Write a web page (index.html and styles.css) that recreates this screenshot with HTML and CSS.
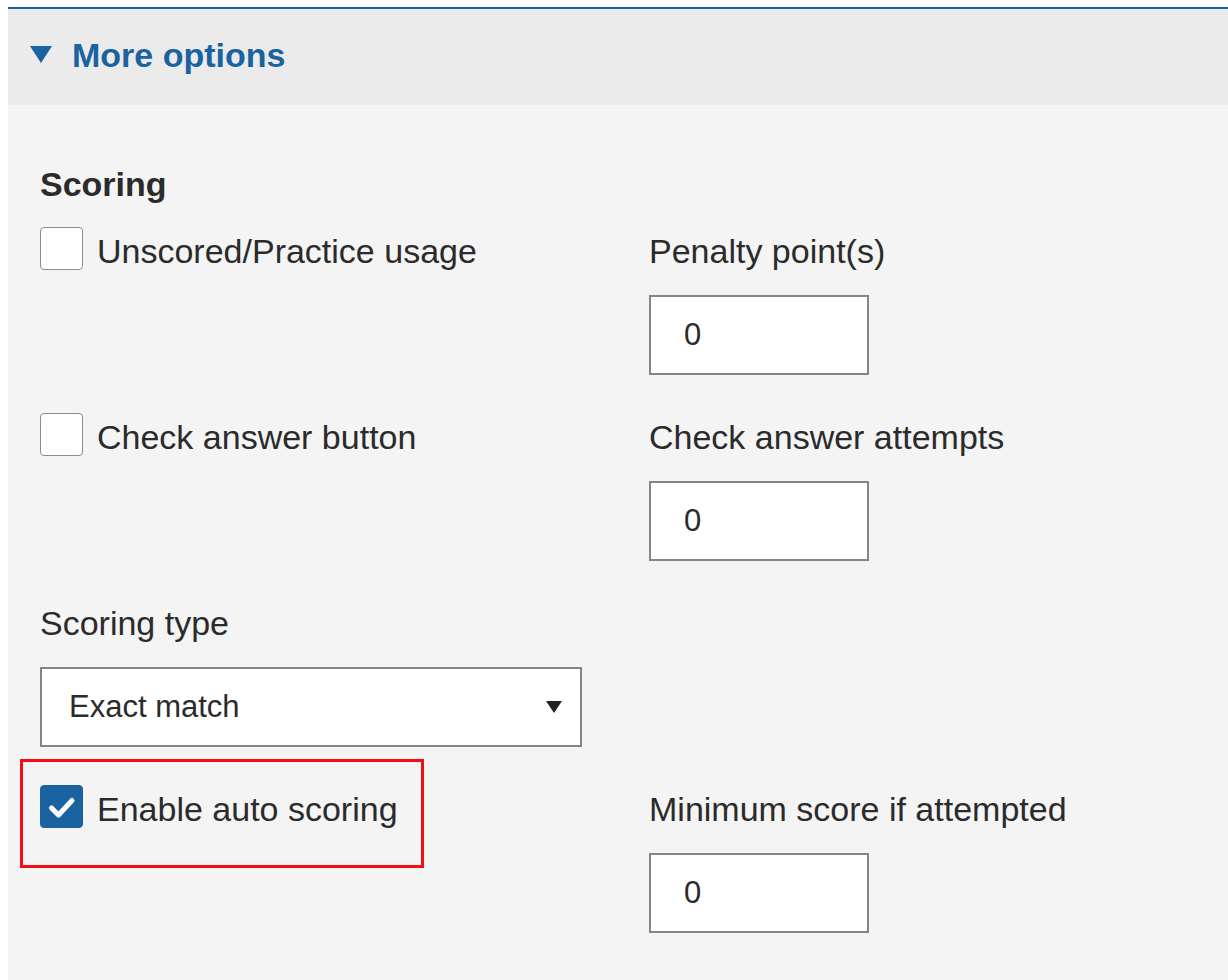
FILE: index.html
```html
<!DOCTYPE html>
<html lang="en">
<head>
<meta charset="utf-8">
<title>More options</title>
<link rel="stylesheet" href="styles.css">
</head>
<body>
<section class="panel">
  <div class="panel-header">
    <span class="caret"></span>
    <span class="panel-title">More options</span>
  </div>
  <div class="panel-body">
    <h2 class="section-title">Scoring</h2>

    <div class="form-grid">
      <div class="cell">
        <label class="check"><span class="box"></span><span class="check-text">Unscored/Practice usage</span></label>
      </div>
      <div class="cell">
        <div class="field-label">Penalty point(s)</div>
        <div class="input">0</div>
      </div>

      <div class="cell">
        <label class="check"><span class="box"></span><span class="check-text">Check answer button</span></label>
      </div>
      <div class="cell">
        <div class="field-label">Check answer attempts</div>
        <div class="input">0</div>
      </div>

      <div class="cell">
        <div class="field-label">Scoring type</div>
        <div class="select"><span>Exact match</span><span class="select-arrow"></span></div>
      </div>
      <div class="cell"></div>

      <div class="cell">
        <div class="highlight">
          <label class="check"><span class="box checked"><svg viewBox="0 0 43 43" width="43" height="43"><polyline points="11.5,23 18.5,30 32,15.5" fill="none" stroke="#ffffff" stroke-width="5" stroke-linecap="round" stroke-linejoin="round"/></svg></span><span class="check-text">Enable auto scoring</span></label>
        </div>
      </div>
      <div class="cell">
        <div class="field-label">Minimum score if attempted</div>
        <div class="input">0</div>
      </div>
    </div>
  </div>
</section>
</body>
</html>
```

FILE: styles.css
```css
html, body {
  margin: 0;
  padding: 0;
  background: #ffffff;
}

body {
  font-family: "Liberation Sans", Arial, Helvetica, sans-serif;
  color: #2b2b2b;
  height: 980px;
  overflow: hidden;
}

.panel {
  margin: 7px 0 0 8px;
  border-top: 2px solid #1a62a0;
}

.panel-header {
  height: 96px;
  background: #ebebeb;
  display: flex;
  align-items: center;
  padding-left: 22px;
  gap: 20px;
}

.caret {
  width: 0;
  height: 0;
  border-left: 11px solid transparent;
  border-right: 11px solid transparent;
  border-top: 17px solid #1a62a0;
  margin-top: -6px;
}

.panel-title {
  font-size: 34px;
  font-weight: bold;
  color: #1a62a0;
  margin-top: -4px;
}

.panel-body {
  background: #f4f4f4;
  padding: 58px 32px 0;
  height: 875px;
  box-sizing: border-box;
}

.section-title {
  margin: 0;
  font-size: 34px;
  line-height: 43px;
  font-weight: bold;
  color: #2b2b2b;
}

.form-grid {
  display: grid;
  grid-template-columns: 609px 1fr;
  row-gap: 38px;
  margin-top: 21px;
}

.cell {
  min-height: 43px;
}

.check {
  display: flex;
  align-items: flex-start;
  gap: 14px;
  font-size: 34px;
  line-height: 43px;
}

.check-text {
  padding-top: 3px;
}

.box {
  width: 43px;
  height: 43px;
  box-sizing: border-box;
  border: 1.5px solid #8c8c8c;
  border-radius: 4px;
  background: #ffffff;
  flex: none;
  display: block;
}

.box.checked {
  background: #1a62a0;
  border-color: #1a62a0;
}

.box.checked svg {
  display: block;
  margin: -1.5px;
}

.field-label {
  font-size: 34px;
  line-height: 43px;
  padding-top: 3px;
  margin-bottom: 22px;
  white-space: nowrap;
}

.input {
  width: 220px;
  height: 80px;
  box-sizing: border-box;
  border: 2px solid #858585;
  background: #ffffff;
  padding-left: 33px;
  font-size: 31px;
  line-height: 76px;
  color: #2b2b2b;
}

.select {
  width: 542px;
  height: 80px;
  box-sizing: border-box;
  border: 2px solid #858585;
  background: #ffffff;
  padding: 0 18px 0 27px;
  font-size: 31px;
  display: flex;
  align-items: center;
  justify-content: space-between;
}

.select-arrow {
  width: 0;
  height: 0;
  border-left: 8.5px solid transparent;
  border-right: 8.5px solid transparent;
  border-top: 12px solid #222222;
  margin-top: -1px;
}

.highlight {
  position: relative;
}

.highlight::after {
  content: "";
  position: absolute;
  left: -20px;
  top: -26px;
  width: 404px;
  height: 109px;
  box-sizing: border-box;
  border: 3px solid #f40d14;
  pointer-events: none;
}
```
